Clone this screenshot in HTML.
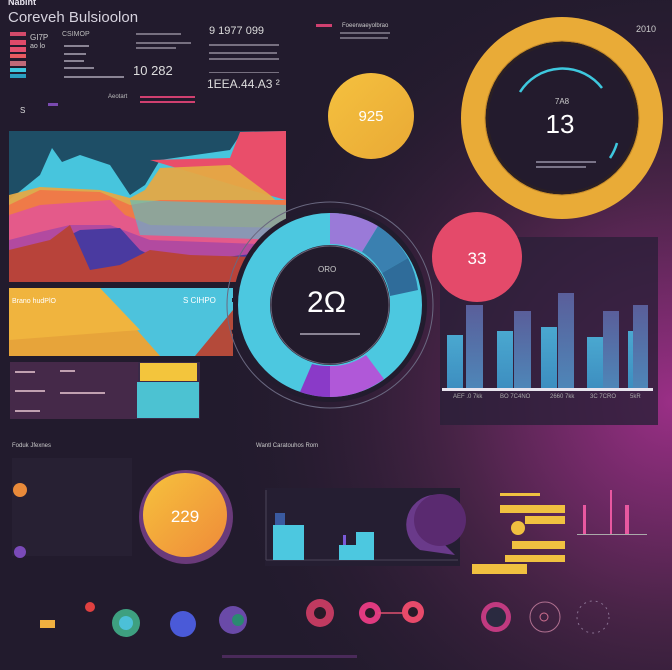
<!DOCTYPE html>
<html><head><meta charset="utf-8"><style>
html,body{margin:0;padding:0;width:672px;height:670px;overflow:hidden;background:#211a2c}
svg{display:block}
text{font-family:"Liberation Sans",sans-serif}
</style></head><body>
<svg width="672" height="670" viewBox="0 0 672 670" xmlns="http://www.w3.org/2000/svg">
<defs>
<radialGradient id="bgR" cx="1" cy="0.6" r="0.7">
<stop offset="0" stop-color="#9a2f86"/><stop offset="0.45" stop-color="#4a2448"/><stop offset="1" stop-color="#211a2c" stop-opacity="0"/>
</radialGradient>
<linearGradient id="yl" x1="0" y1="0" x2="1" y2="1"><stop offset="0" stop-color="#f5c13f"/><stop offset="1" stop-color="#e9a935"/></linearGradient>
<linearGradient id="orb" x1="0" y1="0" x2="1" y2="1"><stop offset="0" stop-color="#f6c23c"/><stop offset="1" stop-color="#ef8a3a"/></linearGradient>
<linearGradient id="bar" x1="0" y1="0" x2="0" y2="1"><stop offset="0" stop-color="#5a5e9a"/><stop offset="1" stop-color="#4e86b8"/></linearGradient>
<linearGradient id="bar2" x1="0" y1="0" x2="0" y2="1"><stop offset="0" stop-color="#4aa8d0"/><stop offset="1" stop-color="#3d8ec0"/></linearGradient>
</defs>
<rect width="672" height="670" fill="#221b2d"/>
<rect width="672" height="670" fill="url(#bgR)"/>

<text x="8" y="5" fill="#e8e4ee" font-size="9" font-weight="bold">Nabint</text>
<text x="8" y="22" fill="#d6d2de" font-size="15">Coreveh Bulsioolon</text>
<rect x="10" y="32" width="16" height="4" fill="#d24a6a"/>
<rect x="10" y="40" width="16" height="5" fill="#e04a6a"/>
<rect x="10" y="47" width="16" height="5" fill="#e4506e"/>
<rect x="10" y="54" width="16" height="4" fill="#e85a60"/>
<rect x="10" y="61" width="16" height="5" fill="#c06a78"/>
<rect x="10" y="68" width="16" height="4" fill="#3ec8de"/>
<rect x="10" y="74" width="16" height="4" fill="#2aa0c0"/>
<text x="30" y="40" fill="#ccc" font-size="8">GI7P</text>
<text x="30" y="48" fill="#ccc" font-size="7">ao lo</text>
<text x="62" y="36" fill="#bbb" font-size="7">CSIMOP</text>
<g fill="#8a8494"><rect x="64" y="45" width="25" height="2"/><rect x="64" y="53" width="22" height="2"/><rect x="64" y="60" width="20" height="2"/><rect x="64" y="67" width="30" height="2"/><rect x="64" y="76" width="60" height="2"/></g>
<g fill="#777080"><rect x="136" y="33" width="45" height="2"/><rect x="136" y="42" width="55" height="2"/><rect x="136" y="47" width="40" height="2"/></g>
<text x="133" y="75" fill="#ddd" font-size="13">10 282</text>
<text x="209" y="34" fill="#ddd" font-size="11">9 1977 099</text>
<g fill="#777080"><rect x="209" y="44" width="70" height="2"/><rect x="209" y="52" width="68" height="2"/><rect x="209" y="58" width="70" height="2"/><rect x="209" y="72" width="70" height="1"/></g>
<text x="207" y="88" fill="#ddd" font-size="12">1EEA.44.A3 ²</text>
<g fill="#d04070"><rect x="140" y="96" width="55" height="2"/><rect x="140" y="101" width="55" height="2"/></g>
<text x="108" y="98" fill="#bbb" font-size="6">Aeotart</text>
<rect x="48" y="103" width="10" height="3" fill="#7a4ab0"/>
<text x="20" y="113" fill="#ddd" font-size="8">S</text>
<rect x="316" y="24" width="16" height="3" fill="#d04070"/>
<text x="342" y="27" fill="#ccc" font-size="6">Foeerwaeyolbrao</text>
<g fill="#6e6878"><rect x="340" y="32" width="50" height="2"/><rect x="340" y="37" width="48" height="2"/></g>

<!-- area chart -->
<rect x="9" y="131" width="277" height="151" fill="#1e4e66"/>
<path d="M9 200 L40 175 L52 148 L62 162 L80 155 L110 165 L130 195 L145 185 L160 160 L230 150 L240 135 L286 131 L286 282 L9 282Z" fill="#47c5dd"/>
<path d="M150 160 L230 158 L240 132 L286 131 L286 200 L250 190 Z" fill="#e94e6a"/>
<path d="M9 195 L40 187 L100 190 L130 198 L145 190 L160 168 L230 165 L270 195 L286 210 L286 282 L9 282Z" fill="#e5a944" opacity="0.95"/>
<path d="M9 205 L40 190 L100 192 L130 205 L160 200 L286 200 L286 282 L9 282Z" fill="#ef7a48"/>
<path d="M9 215 L40 205 L110 200 L125 215 L150 225 L286 228 L286 282 L9 282Z" fill="#e45a8a"/>
<path d="M130 200 L286 205 L286 240 L140 235Z" fill="#4ec0d0" opacity="0.6"/>
<path d="M9 240 L40 232 L70 225 L110 225 L150 240 L286 245 L286 282 L9 282Z" fill="#b24aa0"/>
<path d="M60 240 L80 230 L120 228 L140 250 L160 260 L200 260 L286 250 L286 282 L60 282Z" fill="#4a3aa0"/>
<path d="M9 250 L50 240 L70 225 L90 270 L120 265 L150 250 L190 255 L286 258 L286 282 L9 282Z" fill="#b8433a"/>
<rect x="9" y="288" width="224" height="68" fill="#e7a43a"/>
<path d="M100 288 L233 288 L233 310 L200 356 L160 356 Z" fill="#4dc3dc"/>
<path d="M195 356 L233 310 L233 356Z" fill="#b44a3a"/>
<path d="M9 288 L100 288 L140 330 L9 340Z" fill="#f0b43e"/>
<text x="12" y="303" fill="#fff" font-size="7">Brano hudPlO</text>
<text x="183" y="303" fill="#fff" font-size="8">S CIHPO</text>
<rect x="10" y="362" width="190" height="57" fill="#3a2a48"/>
<rect x="10" y="362" width="128" height="57" fill="#4a2a4a" opacity="0.7"/>
<rect x="140" y="363" width="57" height="18" fill="#f3c53c"/>
<rect x="137" y="382" width="62" height="36" fill="#4cc2d2"/>
<g fill="#c0a0b0"><rect x="15" y="371" width="20" height="2"/><rect x="15" y="390" width="30" height="2"/><rect x="15" y="410" width="25" height="2"/><rect x="60" y="370" width="15" height="2"/><rect x="60" y="392" width="45" height="2"/></g>

<!-- big donut -->
<circle cx="330" cy="305" r="103" fill="none" stroke="#6a6880" stroke-width="1"/>
<circle cx="330" cy="305" r="97" fill="#221c2e"/>
<circle cx="330" cy="305" r="76" fill="none" stroke="#4cc8e0" stroke-width="32"/>
<path d="M330 213 A92 92 0 0 1 378 226 L362 252 A61 61 0 0 0 330 244Z" fill="#9a7ad8"/>
<path d="M378 226 A92 92 0 0 1 408 258 L382 273 A61 61 0 0 0 362 252Z" fill="#3a80b0"/>
<path d="M408 258 A92 92 0 0 1 418 290 L390 296 A61 61 0 0 0 382 273Z" fill="#2f6c9a"/>
<path d="M330 397 A92 92 0 0 1 300 392 L312 364 A61 61 0 0 0 330 366Z" fill="#8a3ac8"/>
<path d="M330 397 A92 92 0 0 0 384 379 L366 355 A61 61 0 0 1 330 366Z" fill="#b058d8"/>
<path d="M238 300 L232 300 M240 330 L232 332" stroke="#221c2e" stroke-width="4"/>
<circle cx="330" cy="305" r="59" fill="#221b2c" stroke="#6a6478" stroke-width="1"/>
<text x="318" y="272" fill="#ccc" font-size="8">ORO</text>
<text x="307" y="312" fill="#fff" font-size="30">2Ω</text>
<g fill="#8a8494"><rect x="300" y="333" width="60" height="2"/></g>

<circle cx="371" cy="116" r="43" fill="url(#yl)"/>
<text x="371" y="121" fill="#fff" font-size="15" text-anchor="middle">925</text>
<circle cx="562" cy="118" r="101" fill="#e9ab37"/>
<circle cx="562" cy="118" r="75" fill="#231b2d" stroke="#2a1f24" stroke-width="3"/>
<circle cx="562" cy="118" r="77" fill="none" stroke="#c48a2a" stroke-width="1"/>
<path d="M520 92 A50 50 0 0 1 602 88" fill="none" stroke="#3ec8de" stroke-width="2.5"/>
<path d="M617 143 A55 55 0 0 1 610 158" fill="none" stroke="#3ec8de" stroke-width="2.5"/>
<text x="562" y="104" fill="#ccc" font-size="8" text-anchor="middle">7A8</text>
<text x="560" y="133" fill="#fff" font-size="26" text-anchor="middle">13</text>
<g fill="#7a7488"><rect x="536" y="161" width="60" height="2"/><rect x="536" y="166" width="50" height="2"/></g>
<text x="636" y="32" fill="#ccc" font-size="9">2010</text>

<!-- bar panel (behind pink circle) -->
<rect x="440" y="237" width="218" height="188" fill="#2a1f38" opacity="0.8"/>
<circle cx="477" cy="257" r="45" fill="#e44a6a"/>
<text x="477" y="264" fill="#fff" font-size="17" text-anchor="middle">33</text>
<g fill="url(#bar)"><rect x="466" y="305" width="17" height="83"/><rect x="514" y="311" width="17" height="77"/><rect x="558" y="293" width="16" height="95"/><rect x="603" y="311" width="16" height="77"/><rect x="633" y="305" width="15" height="83"/></g>
<g fill="url(#bar2)"><rect x="447" y="335" width="16" height="53"/><rect x="497" y="331" width="16" height="57"/><rect x="541" y="327" width="16" height="61"/><rect x="587" y="337" width="16" height="51"/><rect x="628" y="331" width="5" height="57"/></g>
<rect x="442" y="388" width="211" height="3" fill="#e8e4ee"/>
<g fill="#aaa" font-size="6"><text x="453" y="398">AEF .0 7kk</text><text x="500" y="398">BO 7C4NO</text><text x="550" y="398">2660 7kk</text><text x="590" y="398">3C 7CRO</text><text x="630" y="398">5kR</text></g>

<text x="12" y="447" fill="#ccc" font-size="6">Foduk Jfexnes</text>
<text x="256" y="447" fill="#ccc" font-size="6">Wantl Caratouhos Rom</text>
<rect x="12" y="458" width="120" height="98" fill="#2a2236" opacity="0.7"/>
<circle cx="20" cy="490" r="7" fill="#e98a3a"/>
<circle cx="20" cy="552" r="6" fill="#7a4ab8"/>
<circle cx="186" cy="517" r="47" fill="#6a3a7a"/>
<circle cx="185" cy="515" r="42" fill="url(#orb)"/>
<text x="185" y="522" fill="#fff" font-size="17" text-anchor="middle">229</text>
<rect x="265" y="488" width="195" height="78" fill="#251e32"/>
<g stroke="#4a4458" stroke-width="1"><line x1="266" y1="490" x2="266" y2="560"/><line x1="266" y1="560" x2="458" y2="560"/></g>
<rect x="273" y="525" width="31" height="35" fill="#4cc8e0"/>
<rect x="275" y="513" width="10" height="12" fill="#3a5aa0"/>
<rect x="339" y="545" width="20" height="15" fill="#4cc8e0"/>
<rect x="356" y="532" width="18" height="28" fill="#4cc8e0"/>
<rect x="343" y="535" width="3" height="10" fill="#7a5ad8"/>
<path d="M440 495 A30 30 0 0 0 420 550 L455 555 L440 540Z" fill="#6a3a8a"/>
<circle cx="440" cy="520" r="26" fill="#5a2a70"/>
<rect x="500" y="493" width="40" height="3" fill="#f0c040"/>
<rect x="500" y="505" width="65" height="8" fill="#f0c040"/>
<rect x="525" y="516" width="40" height="8" fill="#f0c040"/>
<circle cx="518" cy="528" r="7" fill="#f0c040"/>
<rect x="512" y="541" width="53" height="8" fill="#f0c040"/>
<rect x="505" y="555" width="60" height="7" fill="#f0c040"/>
<rect x="472" y="564" width="55" height="10" fill="#f0c040"/>
<g fill="#e858a0"><rect x="583" y="505" width="3" height="30"/><rect x="610" y="490" width="2" height="45"/><rect x="625" y="505" width="4" height="30"/></g>
<rect x="577" y="534" width="70" height="1" fill="#aaa"/>
<circle cx="126" cy="623" r="14" fill="#3ea080"/>
<circle cx="126" cy="623" r="7" fill="#4cc0d8"/>
<circle cx="183" cy="624" r="13" fill="#4a5ad8"/>
<circle cx="233" cy="620" r="14" fill="#6a4aa8"/>
<circle cx="238" cy="620" r="6" fill="#2a8a70"/>
<circle cx="320" cy="613" r="14" fill="#c03a60"/>
<circle cx="320" cy="613" r="6" fill="#281a28"/>
<circle cx="370" cy="613" r="11" fill="#e03a80"/>
<circle cx="370" cy="613" r="5" fill="#281a28"/>
<line x1="378" y1="613" x2="405" y2="613" stroke="#e05070" stroke-width="1.5"/>
<circle cx="413" cy="612" r="11" fill="#e84a6a"/>
<circle cx="413" cy="612" r="5" fill="#281a28"/>
<circle cx="496" cy="617" r="15" fill="#c03a80"/>
<circle cx="496" cy="617" r="10" fill="#2a2a40"/>
<circle cx="545" cy="617" r="15" fill="none" stroke="#b07090" stroke-width="1"/>
<circle cx="544" cy="617" r="4" fill="none" stroke="#d07090"/>
<circle cx="593" cy="617" r="16" fill="none" stroke="#887090" stroke-width="1" stroke-dasharray="2 4"/>
<rect x="40" y="620" width="15" height="8" fill="#f0b040"/>
<circle cx="90" cy="607" r="5" fill="#e04040"/>
<rect x="222" y="655" width="135" height="3" fill="#4a2a5a"/>
</svg>
</body></html>
